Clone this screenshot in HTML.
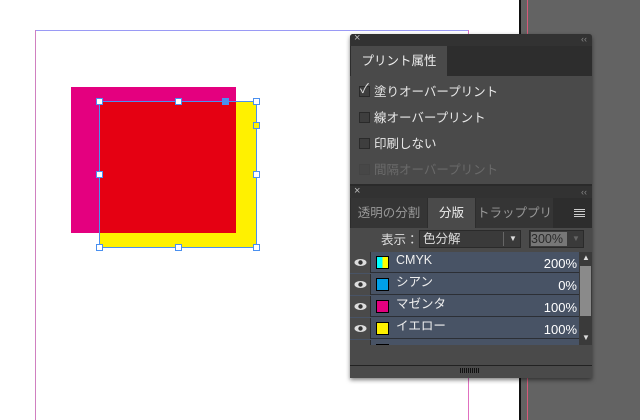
<!DOCTYPE html><html><head><meta charset="utf-8"><style>
*{margin:0;padding:0;box-sizing:border-box}
body{width:640px;height:420px;overflow:hidden;position:relative;background:#fff;font-family:"Liberation Sans","Noto Sans CJK JP",sans-serif}
.a{position:absolute}
.h{position:absolute;width:7px;height:7px;background:#fff;border:1px solid #4a90f0}
.cb{position:absolute;left:9px;width:11px;height:11px;border:1px solid #2a2a2a;background:#3e3e3e}
.lbl{position:absolute;left:24px;font-size:12.5px;line-height:14px;color:#e8e8e8}
.row{position:absolute;left:0;width:229px;height:21px;background:#485365;border-bottom:1px solid #2c2f35}
.eye{position:absolute;left:0;width:21px;height:21px;background:#4a4a4a;border-right:1px solid #2c2c2c}
.eye svg{position:absolute;left:4px;top:6px}
.sw{position:absolute;left:26px;top:4px;width:13px;height:13px;border:1px solid #000}
.rt{position:absolute;left:46px;top:1px;font-size:12.5px;line-height:15px;color:#eee}
.rp{position:absolute;right:2px;top:4px;font-size:13px;line-height:15px;color:#fff}
.tab{position:absolute;top:0;height:30px;font-size:12.5px;line-height:30px;text-align:center}
</style></head><body>
<div class="a" style="left:519px;top:0;width:121px;height:420px;background:#636363;border-left:2px solid #111"></div>
<div class="a" style="left:527px;top:0;width:1px;height:420px;background:#d85a7a"></div>
<div class="a" style="left:35px;top:30px;width:434px;height:1px;background:#9a9af5"></div>
<div class="a" style="left:35px;top:30px;width:1px;height:390px;background:#d080c0"></div>
<div class="a" style="left:468px;top:30px;width:1px;height:390px;background:#e070c0"></div>
<div class="a" style="left:100px;top:102px;width:157px;height:146px;background:#fff100"></div>
<div class="a" style="left:71px;top:87px;width:165px;height:146px;background:#e4007f"></div>
<div class="a" style="left:100px;top:102px;width:136px;height:131px;background:#e50012"></div>
<div class="a" style="left:99px;top:101px;width:158px;height:147px;border:1px solid #4a90f0"></div>
<div class="h" style="left:96px;top:98px"></div><div class="h" style="left:175px;top:98px"></div>
<div class="h" style="left:222px;top:98px;background:#4a90f0"></div><div class="h" style="left:253px;top:98px"></div>
<div class="h" style="left:96px;top:171px"></div><div class="h" style="left:253px;top:171px"></div>
<div class="h" style="left:96px;top:244px"></div><div class="h" style="left:175px;top:244px"></div><div class="h" style="left:253px;top:244px"></div>
<div class="h" style="left:253px;top:122px;background:#fff100"></div>

<div class="a" style="left:350px;top:34px;width:242px;height:344px;background:#2a2a2a;box-shadow:0 2px 4px rgba(0,0,0,.5);border-radius:3px 3px 0 0"></div>
<div class="a" style="left:350px;top:34px;width:242px;height:150px;background:#4a4a4a;border-radius:3px 3px 0 0">
 <div class="a" style="left:0;top:0;width:242px;height:12px;background:#323232;border-radius:3px 3px 0 0"><span class="a" style="left:4px;top:-2px;font-size:11px;line-height:13px;color:#bbb">×</span><span class="a" style="right:5px;top:0;font-size:9px;line-height:10px;color:#888">‹‹</span></div>
 <div class="a" style="left:0;top:12px;width:242px;height:30px;background:#2d2d2d"></div>
 <div class="tab" style="left:1px;top:12px;width:96px;background:#4a4a4a;color:#eee">プリント属性</div>
 <div class="cb" style="top:52px"></div><span class="a" style="left:10px;top:48px;font-size:13px;line-height:14px;color:#ddd">✓</span><div class="lbl" style="top:51px">塗りオーバープリント</div>
 <div class="cb" style="top:78px"></div><div class="lbl" style="top:77px">線オーバープリント</div>
 <div class="cb" style="top:104px"></div><div class="lbl" style="top:103px">印刷しない</div>
 <div class="cb" style="top:130px;border-color:#444;background:#474747"></div><div class="lbl" style="top:129px;color:#6a6a6a">間隔オーバープリント</div>
</div>

<div class="a" style="left:350px;top:186px;width:242px;height:192px;background:#4a4a4a;border-radius:3px 3px 0 0">
 <div class="a" style="left:0;top:0;width:242px;height:12px;background:#323232"><span class="a" style="left:4px;top:-1px;font-size:11px;line-height:13px;color:#bbb">×</span><span class="a" style="right:5px;top:1px;font-size:9px;line-height:10px;color:#888">‹‹</span></div>
 <div class="a" style="left:0;top:12px;width:242px;height:30px;background:#2d2d2d"></div>
 <div class="tab" style="left:1px;top:12px;width:76px;background:#353535;color:#999">透明の分割</div>
 <div class="tab" style="left:78px;top:12px;width:47px;background:#4a4a4a;color:#eee">分版</div>
 <div class="tab" style="left:126px;top:12px;width:77px;background:#353535;color:#999;overflow:hidden;white-space:nowrap">トラッププリ</div>
 <div class="a" style="left:224px;top:23px;width:11px;height:8px;border-top:1px solid #ccc;border-bottom:1px solid #ccc"></div><div class="a" style="left:224px;top:25px;width:11px;height:4px;border-top:1px solid #ccc;border-bottom:1px solid #ccc"></div>
 <span class="a" style="left:31px;top:47px;font-size:12.5px;line-height:14px;color:#ddd">表示：</span>
 <div class="a" style="left:69px;top:44px;width:102px;height:18px;background:#3a3a3a;border:1px solid #2a2a2a;color:#ddd;font-size:12.5px;padding-left:3px;line-height:16px">色分解<span class="a" style="left:83px;top:1px;height:14px;font-size:8px;line-height:14px;color:#ddd;border-left:1px solid #666;padding-left:5px">▼</span></div>
 <div class="a" style="left:179px;top:44px;width:55px;height:18px;background:#3a3a3a;border:1px solid #2a2a2a"><div class="a" style="left:1px;top:1px;width:36px;height:14px;background:#777;color:#2a2a2a;font-size:12.5px;line-height:14px">300%</div><span class="a" style="left:42px;top:2px;font-size:8px;line-height:12px;color:#666">▼</span></div>
 <div class="a" style="left:0;top:66px;width:242px;height:93px;overflow:hidden;background:#485365">
  <div class="row" style="top:0"><div class="eye"><svg width="13" height="9"><ellipse cx="6.5" cy="4.5" rx="6" ry="3.5" fill="#ddd"/><circle cx="6.5" cy="4.5" r="2.2" fill="#333"/></svg></div><div class="sw" style="background:linear-gradient(90deg,#0ff 50%,#ff0 50%)"></div><div class="rt">CMYK</div><div class="rp">200%</div></div>
  <div class="row" style="top:22px"><div class="eye"><svg width="13" height="9"><ellipse cx="6.5" cy="4.5" rx="6" ry="3.5" fill="#ddd"/><circle cx="6.5" cy="4.5" r="2.2" fill="#333"/></svg></div><div class="sw" style="background:#00a0e9"></div><div class="rt">シアン</div><div class="rp">0%</div></div>
  <div class="row" style="top:44px"><div class="eye"><svg width="13" height="9"><ellipse cx="6.5" cy="4.5" rx="6" ry="3.5" fill="#ddd"/><circle cx="6.5" cy="4.5" r="2.2" fill="#333"/></svg></div><div class="sw" style="background:#e4007f"></div><div class="rt">マゼンタ</div><div class="rp">100%</div></div>
  <div class="row" style="top:66px"><div class="eye"><svg width="13" height="9"><ellipse cx="6.5" cy="4.5" rx="6" ry="3.5" fill="#ddd"/><circle cx="6.5" cy="4.5" r="2.2" fill="#333"/></svg></div><div class="sw" style="background:#fff100"></div><div class="rt">イエロー</div><div class="rp">100%</div></div>
  <div class="row" style="top:88px"><div class="eye"></div><div class="sw" style="background:#000"></div></div>
  <div class="a" style="left:229px;top:0;width:13px;height:93px;background:#3a3a3a"><div class="a" style="left:1px;top:14px;width:11px;height:50px;background:#8a8a8a"></div><span class="a" style="left:3px;top:1px;font-size:8px;line-height:10px;color:#ddd">▲</span><span class="a" style="left:3px;top:81px;font-size:8px;line-height:10px;color:#ddd">▼</span></div>
 </div>
 <div class="a" style="left:0;top:179px;width:242px;height:1px;background:#222"></div>
 <div class="a" style="left:110px;top:182px;width:20px;height:5px;background:repeating-linear-gradient(90deg,#111 0 1px,transparent 1px 2px)"></div>
</div>
</body></html>
